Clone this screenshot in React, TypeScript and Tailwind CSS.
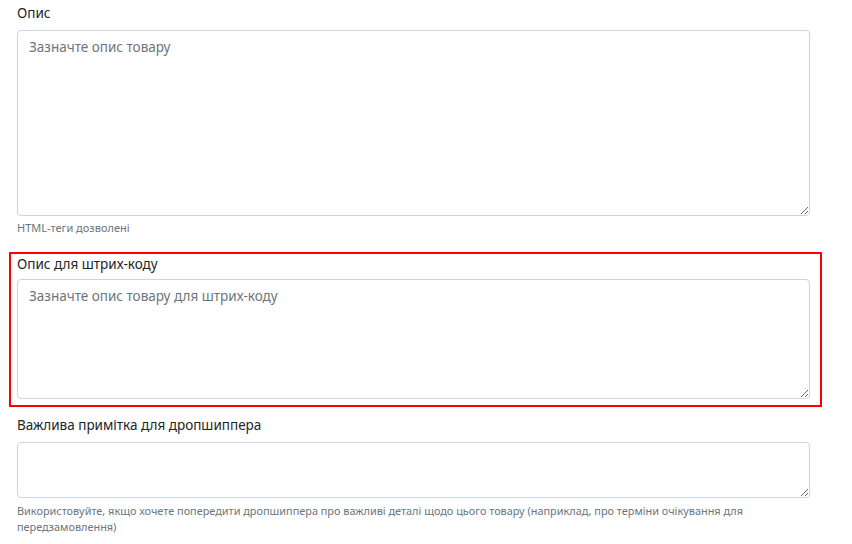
import React from "react";

const ta =
  "block w-full resize-y rounded-[4px] border border-[#ced4da] bg-white px-[11px] py-[6px] text-[13.5px] leading-[21px] text-[#495057] placeholder:text-[#6c757d] outline-none";

export default function App() {
  return (
    <div
      className="min-h-[544px] w-[852px] bg-white text-[#212529]"
      style={{ fontFamily: '"Noto Sans", "Open Sans", sans-serif' }}
    >
      <div className="w-[810px] pl-[17px] pt-[3px]">
        <div>
          <label className="mb-[6px] block text-[13.5px] leading-[21px]">Опис</label>
          <textarea className={`${ta} h-[186px]`} placeholder="Зазначте опис товару" />
          <div className="mt-[4px] text-[11px] leading-[16px] text-[#6c757d]">HTML-теги дозволені</div>
        </div>

        <div className="mt-[16px] -ml-[8px] -mr-[12px] border-2 border-[#ff0000] pb-[6px] pl-[6px] pr-[10px]">
          <label className="mb-[4px] block text-[13.5px] leading-[21px]">Опис для штрих-коду</label>
          <textarea className={`${ta} h-[120px]`} placeholder="Зазначте опис товару для штрих-коду" />
        </div>

        <div className="mt-[8px]">
          <label className="mb-[6px] block text-[13.5px] leading-[21px]">Важлива примітка для дропшиппера</label>
          <textarea className={`${ta} h-[56px]`} />
          <div className="mt-[5px] text-[10.9px] leading-[16px] text-[#6c757d]">
            Використовуйте, якщо хочете попередити дропшиппера про важливі деталі щодо цього товару (наприклад, про терміни очікування для передзамовлення)
          </div>
        </div>
      </div>
    </div>
  );
}
